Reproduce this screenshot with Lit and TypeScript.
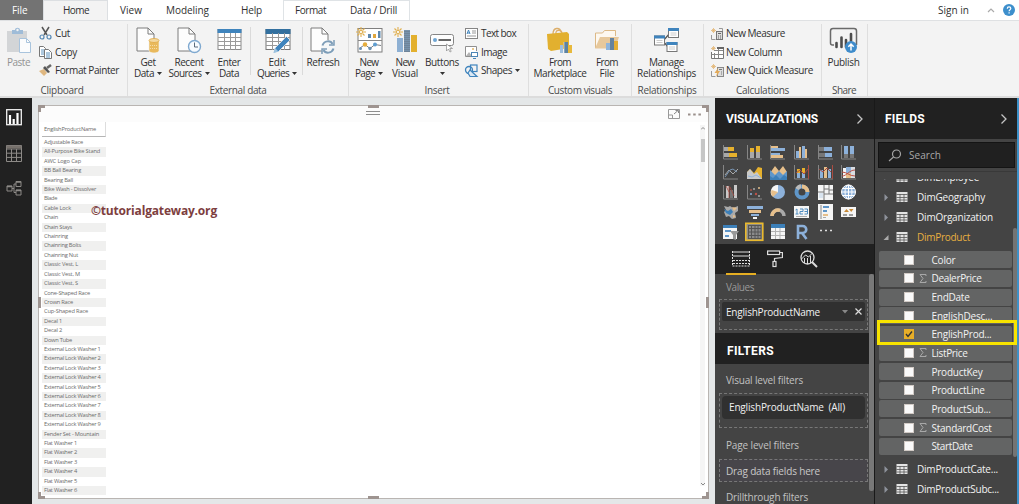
import { LitElement, html, svg, css } from "lit";
import { customElement } from "lit/decorators.js";

const FAMILY = '"Open Sans", "Noto Sans", sans-serif';
const pen = document.createElement("canvas").getContext("2d")!;

/* Text set to a known measure: the tracking is derived from the natural width. */
const label = (text: string, width: number, size = 10, weight = 400, family = FAMILY) => {
  pen.font = `${weight} ${size}px ${family}`;
  const natural = pen.measureText(text).width;
  const tracking = (width - natural) / text.length;
  return html`<span class="label" style="letter-spacing:${tracking.toFixed(3)}px">${text}</span>`;
};

const icon = (w: number, h: number, body: unknown) =>
  html`<svg width=${w} height=${h} viewBox="0 0 ${w} ${h}" fill="none">${body}</svg>`;

const caret = html`<svg class="caret" width="5" height="3" viewBox="0 0 5 3"><path d="M0 0h5L2.500 3z" fill="#333" /></svg>`;

const spark = svg`<path d="M5 0v3M5 7v3M0 5h3M7 5h3M1.500 1.500l2 2M6.500 6.500l2 2M8.500 1.500l-2 2M3.500 6.500l-2 2" stroke="#e0b050" stroke-width="1.100"/><circle cx="5" cy="5" r="1.600" stroke="#e0b050" fill="#fff"/>`;
const page = svg`<path d="M1 1h11l6 6v17H1z" fill="#fdfdfd" stroke="#7c7c7c"/><path d="M12 1v6h6" stroke="#7c7c7c"/>`;

const big = {
  paste: icon(26, 27, svg`<rect x="1" y="4" width="20" height="21" fill="#d3d5d7"/><path d="M6 7V3h3c0-3 5-3 5 0h3v4z" fill="#9fbcd8"/><circle cx="11.500" cy="3" r="1.200" fill="#f3f3f3"/><path d="M13.500 11.500h7l4 4v10h-11z" fill="#fbfcfd" stroke="#a9c4dd"/><path d="M20.500 11.500v4h4" stroke="#a9c4dd"/>`),
  getData: icon(25, 27, svg`${page}<path d="M13 13.500v10c0 3.300 10 3.300 10 0v-10z" fill="#e9b95c" stroke="#f3f3f3" stroke-width=".6"/><ellipse cx="18" cy="13.500" rx="5" ry="2" fill="#f3d9a2" stroke="#e0a844" stroke-width=".8"/><path d="M14 18.500h8M14 21.500h8" stroke="#f5dca8" stroke-dasharray="1 1"/>`),
  recent: icon(25, 27, svg`${page}<circle cx="17.500" cy="19.500" r="6" fill="#f7fbff" stroke="#7fa9d0" stroke-width="1.400"/><path d="M17.500 15.500v4.500h3.500" stroke="#5a6b7c"/>`),
  enter: icon(26, 27, svg`<rect x="2" y="2.500" width="23" height="20" fill="#fff" stroke="#8b8b8b"/><rect x="1.500" y="2" width="24" height="4" fill="#3f84bd"/><path d="M2 10.500h23M2 14.500h23M2 18.500h23M8.500 6v17M14.500 6v17M19.500 6v17" stroke="#9b9b9b"/>`),
  edit: icon(27, 27, svg`<rect x="2" y="2.500" width="24" height="20" fill="#fff" stroke="#777"/><rect x="1.500" y="2" width="25" height="5" fill="#33709f"/><path d="M2 10.500h24M2 14.500h24M2 18.500h24M8.500 6v17M14.500 6v17M20.500 6v17" stroke="#999"/><path d="M9.500 26l1.500-5L22.500 9.500l3.500 3.500L14.500 24.500z" fill="#3f84bd" stroke="#f3f3f3" stroke-width=".7"/><path d="M9.500 26l1.500-5 3.500 3.500z" fill="#9cc2e0"/>`),
  refresh: icon(26, 27, svg`${page}<circle cx="18" cy="20" r="7" fill="#f5f7f8"/><path d="M12.500 18.500c1.500-5 8-5.500 10-1.500M23.500 21.500c-1.500 5-8 5.500-10 1.500" stroke="#7d9db8" stroke-width="2"/><path d="M24 13v5h-5M12 27v-5h5" stroke="#7d9db8" stroke-width="1.500"/>`),
  newPage: icon(27, 27, svg`<rect x="2" y="1.500" width="24" height="23.500" fill="#fff" stroke="#7f7f7f"/><path d="M2 13.500h24" stroke="#888"/><path d="M12 11V7h3v4zM22 11V4h2.500v7z" fill="#5d87ad"/><path d="M17 11V7h3v4z" fill="#e0a63c"/><path d="M4 21l5-3.500 5 4 5-4 6 1" stroke="#7a7f85"/><circle cx="9" cy="17.500" r="2.200" fill="#e6ad3c"/><circle cx="19" cy="17.500" r="2" fill="#5f9ed1"/><circle cx="4.500" cy="21.500" r="1.500" fill="#6c90b0"/><circle cx="14" cy="21.500" r="1.700" fill="#6c90b0"/>${spark}`),
  newVisual: icon(24, 27, svg`${spark}<path d="M4 11h6v14H4z" fill="#8eb0d3"/><path d="M11 3h6v22h-6z" fill="#6f8499"/><path d="M12 3v22M14 3v22M16 3v22" stroke="#86a9c9" stroke-width=".8" stroke-dasharray="1 1"/><path d="M18 8h6v17h-6z" fill="#e3b02e"/>`),
  buttons: icon(26, 27, svg`<rect x="1.500" y="7.500" width="23" height="11" rx="2" fill="#fdfdfd" stroke="#858585"/><circle cx="6" cy="13" r="2" fill="#6ea5d3"/><path d="M9.500 13H22" stroke="#666" stroke-width="2"/><path d="M17.500 17v7l2-2 1.500 3 1.200-.6-1.400-2.900h2.700z" fill="#fff" stroke="#888" stroke-width=".7"/>`),
  market: icon(26, 27, svg`<path d="M6 7c0-7 7-7 8-2M9 7c-1-5 6-5 6 0" stroke="#dcae6a" stroke-width="1.300"/><path d="M0 7l20-2 2 2v14L4 24 1 22z" fill="#e2b02f"/><path d="M13 18h3v8h-3z" fill="#9dbede"/><path d="M17 15h4v11h-4z" fill="#5d83a3"/><path d="M21 18h4v8h-4z" fill="#e8b93c"/><path d="M17 15v11" stroke="#eee" stroke-width=".6"/>`),
  file: icon(26, 27, svg`<path d="M1.500 21V6h7l2-2.500h11V9" fill="#fdf8f0" stroke="#dcb987"/><path d="M1 21.500L6 10h19l-4 11.500z" fill="#e7c89b"/><path d="M12 16h4v7h-4z" fill="#8fb5dc"/><path d="M16 11h4v12h-4z" fill="#65839e"/><path d="M20 14h4v9h-4z" fill="#e3ae35"/>`),
  manage: icon(27, 27, svg`<path d="M10 14l7-8M10 14l5 6" stroke="#555" stroke-width="1.200"/>${[[15.500, 1.500], [1.500, 9], [14, 15.500]].map(([x, y]) => svg`<rect x=${x} y=${y} width="10" height="9" fill="#fff" stroke="#777"/><rect x=${x - 0.5} y=${y - 0.5} width="11" height="3" fill="#3f84bd"/><path d="M${x + 2} ${y + 4.500}h6M${x + 2} ${y + 6.500}h6" stroke="#ccc"/>`)}`),
  publish: icon(29, 27, svg`<path d="M5 18H3.500c-1.500 0-2-1-2-2V4c0-1.500 1-2.500 2.500-2.500h21c1.500 0 2.500 1 2.500 2.500v14" stroke="#6a6a6a" stroke-width="1.500"/><path d="M7.500 16v4M12.500 10.500V20M17 13v7M22 7v7" stroke="#4d4d4d" stroke-width="2.600" stroke-linecap="round"/><circle cx="22" cy="20" r="6" fill="#3f8ccb"/><path d="M22 23.500v-6M19.300 19.800L22 17l2.700 2.800" stroke="#fff" stroke-width="1.500"/>`),
};

const small = {
  cut: icon(13, 13, svg`<path d="M3 0l5 8M10 0L5 8" stroke="#555" stroke-width="1.500"/><circle cx="3" cy="10" r="2" stroke="#5487b3" stroke-width="1.200"/><circle cx="10" cy="10" r="2" stroke="#5487b3" stroke-width="1.200"/>`),
  copy: icon(13, 13, svg`<path d="M.5.500h4l2 2v8h-6z" fill="#fff" stroke="#777"/><path d="M2 4h3M2 6h3M2 8h3" stroke="#5f92bd"/><path d="M5.500 3.500h4l3 3v6h-7z" fill="#fff" stroke="#777"/><path d="M7 7h4M7 9h4M7 11h4" stroke="#5f92bd"/>`),
  painter: icon(13, 13, svg`<path d="M0 7l5-2 3 4-3 3z" fill="#dfb780"/><path d="M4 4l2-2 5 6-2 1z" fill="#555"/><path d="M8 4l4-3" stroke="#666" stroke-width="2.500"/>`),
  text: icon(13, 13, svg`<rect x=".5" y="1.500" width="12" height="10" fill="#fff" stroke="#858585"/><path d="M2 7l1.500-4L5 7M2.500 6h2" stroke="#3f84bd"/><path d="M7 4h4M7 6h4M2 9h9" stroke="#999"/>`),
  image: icon(13, 13, svg`<path d="M6 10.500H.5v-10h11V5" fill="#fff" stroke="#8f8f8f"/><circle cx="8" cy="3" r="1" fill="#e2b565"/><path d="M1 10l3-4 3 4z" fill="#b5b5b5"/><rect x="6.500" y="6.500" width="6" height="4" fill="#fff" stroke="#4c86b6"/><path d="M8 12.500h3" stroke="#4c86b6"/>`),
  shapes: icon(13, 13, svg`<circle cx="4" cy="6" r="3.500" stroke="#3f84bd" stroke-width="1.300"/><rect x="5.500" y="1" width="6.500" height="6.500" stroke="#3f84bd" stroke-width="1.200"/><path d="M3 9l2-3 7 6.500H5z" fill="#dbe9f5" stroke="#3f84bd" stroke-width="1.200"/>`),
  measure: icon(14, 13, svg`<path d="M3.500 1v5M1 3.500h5M2 2l3 3M5 2L2 5" stroke="#e2b573" stroke-width=".8"/><path d="M1.500 8v4.500h4M9 1.500h3.500V4" stroke="#999"/><rect x="6.500" y="4.500" width="6" height="8" fill="#ddd" stroke="#777"/><path d="M8 6.500h3M8 9h1M10 9h1M8 11h1M10 11h1" stroke="#666"/>`),
  column: icon(14, 13, svg`<path d="M3.500 0v5M1 2.500h5M2 1l3 3M5 1L2 4" stroke="#e2b573" stroke-width=".8"/><path d="M1.500 6v6.500h12V1.500H7" fill="#fff" stroke="#777"/><path d="M4.500 7v5M8.500 2v10M4 4.500h9M1.500 8.500h12" stroke="#888"/><rect x="7" y="1" width="7" height="2" fill="#666"/>`),
  quick: icon(14, 13, svg`<path d="M3.500 0v5M1 2.500h5M2 1l3 3M5 1L2 4" stroke="#e2b573" stroke-width=".8"/><path d="M1.500 7v5.500h4" stroke="#999"/><rect x="7.500" y="3.500" width="6" height="9" fill="#ddd" stroke="#888"/><path d="M9 5.500h3M11 8h1M11 10h1" stroke="#777"/><path d="M8 4L4.500 9H7l-1 4 4-6H7.500z" fill="#e3a957"/>`),
};

const G = "#a9a9a9", Y = "#e6b12d", B = "#8db1da", T = "#e6bf8b", D = "#3c7fb8", W = "#f5f5f5";
const axis = svg`<path d="M.5 1v14H15" stroke="#858585"/>`;
const r = (x: number, y: number, w: number, h: number, c: string) => svg`<rect x=${x} y=${y} width=${w} height=${h} fill=${c}/>`;
const visuals: unknown[] = [
  [axis, r(1, 3, 4, 4, G), r(5, 3, 6, 4, Y), r(1, 9, 5, 4, G), r(6, 9, 8, 4, Y)],
  [axis, r(3, 8, 4, 6, G), r(3, 4, 4, 4, Y), r(9, 8, 4, 6, G), r(9, 2, 4, 6, Y)],
  [axis, r(1, 2, 7, 2, T), r(1, 4, 14, 3, B), r(1, 9, 9, 2, B), r(1, 11, 12, 3, T)],
  [axis, r(2, 7, 3, 7, B), r(5, 3, 2, 11, T), r(8, 2, 3, 12, B), r(11, 5, 2, 9, T)],
  [axis, r(1, 3, 5, 4, "#777"), r(6, 3, 8, 4, B), r(1, 9, 6, 4, "#777"), r(7, 9, 7, 4, B)],
  [axis, r(3, 2, 4, 8, B), r(3, 10, 4, 4, "#777"), r(9, 2, 4, 8, B), r(9, 10, 4, 4, "#777")],
  [axis, svg`<path d="M2 11l4-5 4 4 5-5" stroke=${G}/><path d="M2 13l5-7 3-1 4 3" stroke="#7794b3"/>`],
  [svg`<path d="M0 15V8l3-3 4 4 4-6 4 1v11z" fill=${Y}/><path d="M0 15V8l3-3 4 5 3-2 5 7z" fill="#c9c9c9"/><path d="M1 12l4 1 4-2 5 3" stroke=${B}/>`],
  [svg`<path d="M0 9l5-7 4 5 4-5 4 6v8H0z" fill=${T}/><path d="M0 6l5 5 4-4 4 4 4-4v9H0z" fill="#5f96c9"/><path d="M0 12l3 2 3-3 4 4 4-4 3 2v3H0z" fill=${D}/>`],
  [axis, r(3, 9, 3, 5, B), r(3, 5, 3, 4, Y), r(8, 4, 3, 5, Y), r(8, 9, 3, 5, B), svg`<path d="M2 9l4-3 4 4 4-5M14.500 1v14" stroke="#a94c42"/>`],
  [axis, r(2, 6, 3, 8, B), r(6, 3, 3, 11, T), r(10, 5, 3, 9, B), svg`<path d="M1 5l4 3 4-4 4 4M14.500 1v14" stroke="#a94c42"/>`],
  [axis, r(2, 4, 3, 10, W), r(5, 3, 5, 6, B), r(5, 9, 5, 5, T), r(10, 3, 4, 11, "#d8dde2"), svg`<path d="M1 8c5 0 7 4 13 4M1 12c5 0 7-6 13-6" stroke="#bb5147"/>`],
  [axis, r(3, 2, 3, 12, "#c9c9c9"), r(11, 1, 3, 13, "#c9c9c9"), r(7, 6, 3, 8, "#777"), svg`<path d="M3 2l3 6M6 2v12M7 3l4 9" stroke="#a94c42" stroke-width=".8"/>`],
  [axis, svg`<g><circle cx="4" cy="10" r="1" fill=${B}/><circle cx="7" cy="5" r="1" fill=${G}/><circle cx="9" cy="10" r="1.200" fill="#bb5147"/><circle cx="12" cy="4" r="1" fill=${T}/><circle cx="12" cy="12" r="1" fill=${G}/><circle cx="4" cy="6" r="1" fill="#aa5548"/></g>`],
  [svg`<circle cx="8" cy="8" r="7" fill=${B}/><path d="M8 8V1a7 7 0 0 0-6 11z" fill=${W}/><path d="M8 8l-6.500-2A7 7 0 0 0 3 13z" fill=${T}/>`],
  [svg`<circle cx="8" cy="8" r="5.500" stroke="#5f96c9" stroke-width="4"/><path d="M8 2.500A5.500 5.500 0 0 1 13.500 8" stroke=${T} stroke-width="4"/><path d="M3 5A6 6 0 0 1 7 2" stroke="#bbb" stroke-width="4"/>`],
  [r(0, 1, 15, 15, W), svg`<path d="M6 1v15M11 1v9M0 8h6M6 5h5M6 10h9M11 6h4" stroke="#777"/>`, r(1, 9, 4, 5, "#d9e4ef")],
  [svg`<circle cx="7.500" cy="8" r="7" fill="#8db1da" stroke="#fff"/><path d="M.5 8h14M7.500 1v14M2 4.500h11M2 11.500h11" stroke="#fff"/><ellipse cx="7.500" cy="8" rx="3.500" ry="7" stroke="#fff"/>`],
  [svg`<path d="M1 2l4 1 2-1 3 2 5-2v5l-3 2 1 5-4 1-3-3-3 1-2-5 2-2z" fill=${G}/><path d="M1 5l4 2 3-2 2 3-3 3-4-2z" fill=${D}/><path d="M9 3l5 1-3 3zM10 11l3 1-3 2z" fill=${T}/>`],
  [r(0, 2, 16, 3, B), r(2, 6, 12, 3, T), r(4, 10, 8, 2, B), r(6, 13, 4, 2, W)],
  [svg`<path d="M2 12a6 6 0 0 1 12 0" stroke=${G} stroke-width="3.500"/><path d="M2 12a6 6 0 0 1 8-5.600" stroke=${T} stroke-width="3.500"/>`],
  [r(0, 2, 15, 12, W), svg`<path d="M1.500 6L3 5v5M1.500 10h3M6 5h3v2.500H6V10h3M10.500 5h3v5h-3M10.500 7.500h3" stroke="#4f8cc0"/><path d="M2 12.500h11" stroke=${G}/>`],
  [r(0, 0, 15, 16, W), svg`<path d="M3 1v14" stroke="#888"/>`, r(5, 2, 6, 2, "#5f96c9"), r(5, 6, 4, 2, "#5f96c9"), r(5, 10, 5, 2, T), r(5, 13, 3, 1, G)],
  [r(0, 3, 15, 10, W), svg`<path d="M3 8l2.500-3L8 8zM8 5h4.500l-2.300 3z" fill="#c78936"/><path d="M2 11h4M8 11h4" stroke="#444"/>`],
  [r(0, 1, 14, 14, W), r(0, 1, 14, 3, D), svg`<path d="M2 7h6M2 12h4" stroke="#5f96c9" stroke-width="2"/><path d="M7 7h9l-3 4v5l-3-1v-4z" fill="#999"/>`],
  [svg`<rect x="-1.200" y="-.7" width="17" height="17" fill="#8b8b8b" stroke="#e9b92e" stroke-width="1.600"/><path d="M1 1.500h13M1 4.500h13M1 8h13M1 11.500h13M1 14.500h13M1.500 1v14M4.500 1v14M8 1v14M11 1v14M14 1v14" stroke="#555"/>`],
  [r(1, 1, 14, 14, W), r(1, 0, 14, 4, D), svg`<path d="M1 7.500h14M1 11.500h14M5.500 4v11M10 4v11" stroke="#b3b3b3"/>`],
  [svg`<path d="M4 15V2h4.500c5 0 5 7 0 7H4M8 9l4.500 6" stroke=${B} stroke-width="2.600"/>`],
  [svg`<path d="M2 6.500h2M7 6.500h2M12 6.500h2" stroke="#ddd" stroke-width="1.600"/>`],
];

const tableIcon = icon(12, 12, svg`<rect x=".5" y="1" width="11" height="10" fill="#e4e4e4"/><path d="M.5 3.500h11M.5 6.500h11M.5 9h11M4 3v8M8 3v8" stroke="#555" stroke-width=".8"/>`);

const products = [
  ["Adjustable Race", 39], ["All-Purpose Bike Stand", 56], ["AWC Logo Cap", 37], ["BB Ball Bearing", 37],
  ["Bearing Ball", 29], ["Bike Wash - Dissolver", 52], ["Blade", 13], ["Cable Lock", 27], ["Chain", 14],
  ["Chain Stays", 28], ["Chainring", 24], ["Chainring Bolts", 37], ["Chainring Nut", 34], ["Classic Vest, L", 34],
  ["Classic Vest, M", 36], ["Classic Vest, S", 34], ["Cone-Shaped Race", 46], ["Crown Race", 29],
  ["Cup-Shaped Race", 44], ["Decal 1", 18], ["Decal 2", 18], ["Down Tube", 28],
  ...[1, 2, 3, 4, 5, 6, 7, 8, 9].map((n) => [`External Lock Washer ${n}`, 56.500]),
  ["Fender Set - Mountain", 55], ...[1, 2, 3, 4, 5, 6].map((n) => [`Flat Washer ${n}`, 33]),
] as [string, number][];

const fields: [string, number, string][] = [
  ["Color", 24, ""], ["DealerPrice", 50, "sum"], ["EndDate", 38, ""], ["EnglishDesc...", 61, ""],
  ["EnglishProd...", 60, "on"], ["ListPrice", 36, "sum"], ["ProductKey", 51, ""], ["ProductLine", 53, ""],
  ["ProductSub...", 59, ""], ["StandardCost", 60, "sum"], ["StartDate", 41, ""],
];

@customElement("pbi-ribbon")
class PbiRibbon extends LitElement {
  static styles = css`
    :host { display: block; height: 98px; font: 10px/11px "Open Sans", "Noto Sans", sans-serif; color: #303030; }
    svg { display: block; flex: none; overflow: visible; }
    .label { display: inline-block; white-space: pre; }
    .tabs { display: flex; height: 20px; background: #fff; line-height: 20px; }
    .file, .home, .context { box-sizing: border-box; height: 20px; }
    .file { width: 43px; padding-left: 12px; background: #737373; color: #fff; }
    .home { width: 65px; padding-left: 19px; background: #f3f3f3; border: 1px solid #dcdfe2; border-bottom: 0; line-height: 19px; }
    .view { padding-left: 12px; width: 34px; }
    .modeling { padding-left: 12px; width: 63px; }
    .help { padding-left: 12px; width: 30px; }
    .context { display: flex; width: 127px; margin-left: 12px; padding-left: 11px; gap: 24px; border: 1px solid #dfe3e6; border-bottom: 0; line-height: 19px; }
    .account { margin-left: auto; display: flex; align-items: center; padding-right: 4px; gap: 18px; }
    .end { display: flex; align-items: center; gap: 8px; }
    .bar { box-sizing: border-box; display: flex; height: 78px; padding-top: 3px; background: #f3f3f3; border-top: 1px solid #dfe1e3; border-bottom: 2px solid #dcdcdc; }
    .group { box-sizing: border-box; display: flex; flex-direction: column; height: 72px; border-right: 1px solid #dedede; }
    .tools { display: flex; height: 60px; }
    .title { text-align: center; line-height: 12px; color: #4c4c4c; }
    .g1 { width: 128px; } .g2 { width: 221px; } .g3 { width: 180px; } .g4 { width: 103px; } .g5 { width: 72px; } .g6 { width: 118px; } .g7 { width: 46px; }
    .g1 .title, .g3 .title { padding-right: 3px; }
    .g5 .title, .g7 .title { padding-right: 1px; }
    .big { display: flex; flex-direction: column; align-items: center; padding-top: 3px; white-space: nowrap; }
    .big svg:first-child { margin-bottom: 3px; }
    .line { display: flex; align-items: center; gap: 3px; height: 11px; }
    .line svg.caret { margin: 0; }
    .faded { color: #929292; }
    .w32 { width: 32px; } .w37 { width: 37px; } .w38 { width: 38px; } .w40 { width: 40px; } .w42 { width: 42px; } .w45 { width: 43px; } .w48 { width: 48px; } .w62 { width: 62px; } .w71 { width: 69px; }
    .rule { width: 1px; height: 48px; margin: 3px 2px 0; background: #dadada; }
    .rule.second { margin: 3px 0 0 1px; }
    .stack { display: flex; flex-direction: column; padding-top: 0.5px; }
    .row { display: flex; align-items: center; height: 18.5px; gap: 3px; }
    .calc { padding-left: 6px; } .calc .row { gap: 2px; }
    .clip { padding-left: 2px; } .insert { padding-left: 2px; }
  `;
  big(w: string, glyph: unknown, lines: unknown[]) {
    return html`<div class="big ${w}">${glyph}${lines.map((l) => html`<div class="line">${l}</div>`)}</div>`;
  }
  row(glyph: unknown, text: string, w: number, more: unknown = "") {
    return html`<div class="row">${glyph}${label(text, w)}${more}</div>`;
  }
  group(cls: string, title: string, w: number, tools: unknown) {
    return html`<section class="group ${cls}"><div class="tools">${tools}</div><div class="title">${label(title, w)}</div></section>`;
  }
  render() {
    return html`
      <nav class="tabs">
        <div class="file">${label("File", 15.500)}</div>
        <div class="home">${label("Home", 26)}</div>
        <div class="view">${label("View", 22)}</div>
        <div class="modeling">${label("Modeling", 43)}</div>
        <div class="help">${label("Help", 21)}</div>
        <div class="context">${label("Format", 31)}${label("Data / Drill", 47)}</div>
        <div class="account">${label("Sign in", 31)}
          <div class="end">
            ${icon(8, 5, svg`<path d="M1 4l3-3 3 3" stroke="#aaa" stroke-width="1.200"/>`)}
            ${icon(12, 12, svg`<circle cx="6" cy="6" r="6" fill="#3d8fcc"/><path d="M4.300 4.700c0-2.400 3.500-2.200 3.500-.2 0 1.300-1.700 1.100-1.700 2.800M6.100 8.300v1.200" stroke="#fff" stroke-width="1.200"/>`)}
          </div>
        </div>
      </nav>
      <div class="bar">
        ${this.group("g1", "Clipboard", 43, html`
          ${this.big("w37 faded", big.paste, [label("Paste", 23)])}
          <div class="stack clip">${this.row(small.cut, "Cut", 15)}${this.row(small.copy, "Copy", 22)}${this.row(small.painter, "Format Painter", 64)}</div>`)}
        ${this.group("g2", "External data", 57, html`
          ${this.big("w40", big.getData, [label("Get", 15), html`${label("Data", 20)}${caret}`])}
          ${this.big("w42", big.recent, [label("Recent", 29), html`${label("Sources", 33)}${caret}`])}
          ${this.big("w38", big.enter, [label("Enter", 23), label("Data", 20)])}
          <i class="rule"></i>
          ${this.big("w48", big.edit, [label("Edit", 17), html`${label("Queries", 32)}${caret}`])}
          <i class="rule second"></i>
          ${this.big("w40", big.refresh, [label("Refresh", 33)])}`)}
        ${this.group("g3", "Insert", 25, html`
          ${this.big("w40", big.newPage, [label("New", 19), html`${label("Page", 20)}${caret}`])}
          ${this.big("w32", big.newVisual, [label("New", 19), label("Visual", 26)])}
          ${this.big("w42", big.buttons, [label("Buttons", 34), caret])}
          <div class="stack insert">${this.row(small.text, "Text box", 35)}${this.row(small.image, "Image", 26)}${this.row(small.shapes, "Shapes", 31, caret)}</div>`)}
        ${this.group("g4", "Custom visuals", 64, html`
          ${this.big("w62", big.market, [label("From", 22), label("Marketplace", 53)])}
          ${this.big("w32", big.file, [label("From", 22), label("File", 15)])}`)}
        ${this.group("g5", "Relationships", 59, this.big("w71", big.manage, [label("Manage", 35), label("Relationships", 59)]))}
        ${this.group("g6", "Calculations", 53, html`
          <div class="stack calc">${this.row(small.measure, "New Measure", 59)}${this.row(small.column, "New Column", 56)}${this.row(small.quick, "New Quick Measure", 87)}</div>`)}
        ${this.group("g7", "Share", 24, this.big("w45", big.publish, [label("Publish", 32)]))}
      </div>`;
  }
}

@customElement("pbi-canvas")
class PbiCanvas extends LitElement {
  static styles = css`
    :host { box-sizing: border-box; display: block; width: 683px; height: 406px; padding: 7px 6px 5px; background: #e4e7e8; font: 5.7px/9.42px "Open Sans", "Noto Sans", sans-serif; color: #6b6b6b; }
    svg { display: block; }
    .label { white-space: pre; }
    .visual { position: relative; box-sizing: border-box; height: 394px; padding: 0 3px 0 2.500px; background: #fff; border: 1px solid #b9b5b2; display: flex; flex-direction: column; }
    .head { display: flex; justify-content: flex-end; align-items: center; gap: 8px; height: 16px; margin: 0 -3px; padding-right: 7px; background: #fcfcfc; }
    .content { display: flex; justify-content: space-between; height: 376px; }
    .grid { width: 64px; }
    .caption { box-sizing: border-box; height: 15px; padding-left: 2.500px; margin-bottom: 1px; line-height: 15px; border-bottom: 1px solid #b5b5b5; border-right: 1px solid #ddd; }
    .item { height: 9.42px; padding-left: 2.500px; }
    .item:nth-child(odd) { background: #f0f0ef; }
    .scroll { width: 5px; margin-top: 3px; margin-bottom: 12px; display: flex; flex-direction: column; align-items: center; background: #f5f5f5; }
    .thumb { width: 4px; height: 23px; margin: 8px 0 auto; background: #c6c6c6; }
    .handle { position: absolute; box-sizing: border-box; border: 0 solid #9e9490; }
    .nw { left: -1px; top: -1px; width: 7px; height: 7px; border-width: 3px 0 0 3px; }
    .ne { right: -1px; top: -1px; width: 7px; height: 7px; border-width: 3px 3px 0 0; }
    .sw { left: -1px; bottom: -1px; width: 7px; height: 7px; border-width: 0 0 3px 3px; }
    .se { right: -1px; bottom: -1px; width: 7px; height: 7px; border-width: 0 3px 3px 0; }
    .n { left: 329px; top: -1px; width: 11px; height: 3px; border-top-width: 3px; }
    .s { left: 329px; bottom: -1px; width: 11px; height: 3px; border-top-width: 3px; }
    .w { left: -1px; top: 191px; width: 3px; height: 11px; border-left-width: 3px; }
    .e { right: -1px; top: 191px; width: 3px; height: 11px; border-left-width: 3px; }
    .grip { position: absolute; left: 327px; top: 5px; width: 14px; height: 2px; border: solid #8e8e8e; border-width: 1px 0; }
    .mark { position: absolute; left: 52px; top: 97px; font-size: 12px; font-weight: 700; line-height: 16px; color: #7d3e3e; }
  `;
  render() {
    return html`<div class="visual">
      <div class="head">
        ${icon(12, 10, svg`<path d="M.5.500h11v9H.5zM.5 6h4v3.500" stroke="#999"/><path d="M6 5l4-3.500M7.500 1.500H10.500V4" stroke="#888"/>`)}
        ${icon(13, 3, svg`<path d="M0 1.500h2.500M5.200 1.500h2.500M10.400 1.500h2.500" stroke="#9a8f8b" stroke-width="2"/>`)}
      </div>
      <div class="content">
        <div class="grid">
          <div class="caption">${label("EnglishProductName", 52, 5.700)}</div>
          ${products.map(([name, w]) => html`<div class="item">${label(name, w, 5.700)}</div>`)}
        </div>
        <div class="scroll">
          ${icon(4, 6, svg`<path d="M0 4.500l2-2 2 2" stroke="#888"/>`)}
          <div class="thumb"></div>
          ${icon(4, 4, svg`<path d="M0 1l2 2 2-2" stroke="#888"/>`)}
        </div>
      </div>
      <i class="grip"></i>
      ${["nw", "ne", "sw", "se", "n", "s", "w", "e"].map((c) => html`<i class="handle ${c}"></i>`)}
      <div class="mark">${label("©tutorialgateway.org", 126, 12, 700)}</div>
    </div>`;
  }
}

@customElement("pbi-visuals")
class PbiVisuals extends LitElement {
  static styles = css`
    :host { display: block; width: 159px; height: 406px; overflow: hidden; background: #444; font: 10px/14px "Open Sans", "Noto Sans", sans-serif; color: #c9c9c9; }
    svg { display: block; overflow: visible; }
    .label { white-space: pre; }
    .title { box-sizing: border-box; display: flex; align-items: center; justify-content: space-between; height: 41px; padding: 0 11px; background: #212121; color: #fff; font: 700 12px "Roboto", sans-serif; }
    .gallery { box-sizing: border-box; display: grid; grid-template-columns: repeat(6, 16px); grid-auto-rows: 16px; column-gap: 7.7px; row-gap: 4.2px; height: 105px; padding: 4.500px 0 0 8px; }
    .modes { display: flex; height: 30px; padding-left: 11px; background: #212121; }
    .mode { box-sizing: border-box; width: 30px; height: 31px; padding: 6px 0 0 6px; border-bottom: 2px solid transparent; margin-right: 4px; }
    .mode.on { border-color: #e6ae22; }
    .scroller { display: flex; height: 230px; }
    .form { width: 154px; }
    .track { width: 5px; }
    .thumb { height: 217px; background: #787878; border-radius: 2px; }
    .cap { padding-left: 11px; height: 14px; color: #c2c2c2; }
    .dim { color: #999; padding-top: 6px; }
    .well { box-sizing: border-box; margin: 5px 1px 0 4px; padding: 2px; border: 1px dashed #777; }
    .values { height: 31px; }
    .chip { display: flex; align-items: center; height: 19px; background: #303030; border-radius: 2px; color: #f0f0f0; padding-left: 4px; }
    .chip svg:nth-of-type(1) { margin: 0 7px 0 auto; }
    .chip svg:nth-of-type(2) { margin-right: 3px; }
    .filters { box-sizing: border-box; display: flex; align-items: center; height: 31px; margin-top: 3px; padding: 4px 0 0 12px; background: #212121; color: #fff; font: 700 12px "Roboto", sans-serif; }
    .cap.visual { padding-top: 9px; }
    .well.visual { height: 35px; margin-top: 6px; }
    .chip.tall { height: 23px; border-radius: 4px; padding-left: 7px; }
    .chip.tall .label { padding-bottom: 1px; }
    .cap.page { padding-top: 10px; }
    .well.drag { height: 23px; margin-top: 7px; padding: 4px 6px; background: #47454a; }
    .cap.drill { padding-top: 8px; }
  `;
  render() {
    const rf = '"Roboto", sans-serif';
    return html`
      <header class="title">${label("VISUALIZATIONS", 92, 12, 700, rf)}${icon(6, 10, svg`<path d="M.5.500L5 5 .5 9.500" stroke="#c5c5c5" stroke-width="1.300"/>`)}</header>
      <div class="gallery">${visuals.map((v) => icon(16, 16, v))}</div>
      <div class="modes">
        <div class="mode on">${icon(18, 17, svg`<path d="M1 2h17M1 6h17" stroke="#ddd" stroke-width="1.200"/><path d="M.5 1v15h17V1M1 10.500h17M1 13.500h17" stroke="#ddd" stroke-dasharray="2 1"/>`)}</div>
        <div class="mode">${icon(16, 17, svg`<rect x="1.600" y="1" width="12" height="3.500" stroke="#ddd" stroke-width="1.200"/><path d="M14 2.500h2.400v5L8.500 8.500v3" stroke="#ddd" stroke-width="1.200"/><rect x="7" y="11.500" width="3" height="5" stroke="#ddd" stroke-width="1.200"/>`)}</div>
        <div class="mode">${icon(18, 18, svg`<circle cx="7.500" cy="7.500" r="6.500" stroke="#ddd" stroke-width="1.300"/><path d="M12 12l5 5" stroke="#ddd" stroke-width="2"/><path d="M1.500 9l4-4 3 2 4-4M4.500 8v5M7.500 8v6M10.500 6v7" stroke="#ddd"/>`)}</div>
      </div>
      <div class="scroller">
        <div class="form">
          <div class="cap dim">${label("Values", 28)}</div>
          <div class="well values"><div class="chip">${label("EnglishProductName", 94)}${icon(6, 4, svg`<path d="M0 0h6L3 3.500z" fill="#888"/>`)}${icon(7, 7, svg`<path d="M.5.500l6 6M6.500.500l-6 6" stroke="#ddd" stroke-width="1.200"/>`)}</div></div>
          <div class="filters">${label("FILTERS", 47, 12, 700, rf)}</div>
          <div class="cap visual">${label("Visual level filters", 77)}</div>
          <div class="well visual"><div class="chip tall">${label("EnglishProductName  (All)", 116)}</div></div>
          <div class="cap page">${label("Page level filters", 73)}</div>
          <div class="well drag">${label("Drag data fields here", 94)}</div>
          <div class="cap drill">${label("Drillthrough filters", 82)}</div>
        </div>
        <div class="track"><div class="thumb"></div></div>
      </div>`;
  }
}

@customElement("pbi-fields")
class PbiFields extends LitElement {
  static styles = css`
    :host { position: relative; display: block; width: 142px; height: 406px; overflow: hidden; background: #444; font: 10px/14px "Open Sans", "Noto Sans", sans-serif; color: #f2f2f2; }
    svg { display: block; flex: none; }
    .label { white-space: pre; }
    .title { box-sizing: border-box; display: flex; align-items: center; justify-content: space-between; height: 41px; padding: 0 10px; background: #212121; color: #fff; font: 700 12px "Roboto", sans-serif; }
    .search { box-sizing: border-box; display: flex; align-items: center; gap: 7px; width: 137px; height: 26px; margin: 3px 0 3px 3px; padding-left: 9px; background: #202020; border: 1px solid #141414; color: #a9a9a9; }
    .list { display: flex; flex-direction: column; height: 325px; padding-top: 7px; border-top: 1px solid #393939; overflow: hidden; }
    .clip { display: flex; flex-direction: column; justify-content: flex-end; height: 8px; flex: none; overflow: hidden; }
    .table { display: flex; align-items: center; height: 20.2px; flex: none; padding-left: 8px; }
    .table svg:nth-of-type(1) { margin-right: 7px; }
    .table svg:nth-of-type(2) { margin-right: 9px; }
    .open { color: #e8b040; }
    .columns { display: flex; flex-direction: column; flex: none; gap: 1.65px; margin: 3.7px 0 4.500px 4px; width: 133px; }
    .field { box-sizing: border-box; display: flex; align-items: center; height: 17px; padding-left: 25px; background: #636464; border-radius: 2px; }
    .box { box-sizing: border-box; width: 10px; height: 10px; margin-right: 5px; background: #fafafa; border: 1px solid #d2cbc6; }
    .box.on { background: #e8ae28; border-color: #e8ae28; }
    .sigma { width: 9px; margin-right: 3.5px; }
    .thumb { position: absolute; right: 0; top: 130px; width: 4px; height: 229px; background: #747474; border-radius: 2px; }
    .ring { position: absolute; left: 2px; top: 222px; box-sizing: border-box; width: 140px; height: 25px; border: 3px solid #f8e400; }
  `;
  table(name: string, w: number, open = false) {
    return html`<div class="table ${open ? "open" : ""}">
      ${icon(6, 7, open ? svg`<path d="M5.500 1v5h-5z" fill="#aaa"/>` : svg`<path d="M1.500 0v7L5 3.500z" fill="#8e929b"/>`)}${tableIcon}${label(name, w)}</div>`;
  }
  render() {
    return html`
      <header class="title">${label("FIELDS", 40, 12, 700, '"Roboto", sans-serif')}${icon(6, 10, svg`<path d="M.5.500L5 5 .5 9.500" stroke="#c5c5c5" stroke-width="1.300"/>`)}</header>
      <div class="search">${icon(14, 13, svg`<circle cx="8.500" cy="5" r="4" stroke="#a5a5a5" stroke-width="1.200"/><path d="M5.500 8L1 12" stroke="#a5a5a5" stroke-width="1.200"/>`)}${label("Search", 32)}</div>
      <div class="list">
        <div class="clip">${this.table("DimEmployee", 62)}</div>
        ${this.table("DimGeography", 68)}${this.table("DimOrganization", 76)}${this.table("DimProduct", 53, true)}
        <div class="columns">${fields.map(([name, w, kind]) => html`<div class="field">
          <span class="box ${kind}">${kind === "on" ? icon(8, 8, svg`<path d="M1 4l2 2.500L7 1.500" stroke="#333" stroke-width="1.400"/>`) : ""}</span>
          <span class="sigma">${kind === "sum" ? icon(8, 9, svg`<path d="M7 2V.500H1L4 4.500 1 8.500H7V7" stroke="#a8a8a8"/>`) : ""}</span>
          ${label(name, w)}</div>`)}</div>
        ${this.table("DimProductCate...", 81)}${this.table("DimProductSubc...", 82)}
      </div>
      <i class="thumb"></i><i class="ring"></i>`;
  }
}

@customElement("app-root")
class AppRoot extends LitElement {
  static styles = css`
    :host { display: block; width: 1019px; height: 504px; overflow: hidden; background: #212121; }
    .body { display: flex; height: 406px; }
    .rail { display: flex; flex-direction: column; align-items: center; gap: 19px; box-sizing: border-box; width: 32px; padding: 11px 4px 0 0; background: #212121; }
    .rail svg { display: block; }
    .gap { width: 1px; background: #191919; }
    .edge { flex: 1; background: #3e91c8; }
  `;
  render() {
    return html`<pbi-ribbon></pbi-ribbon>
      <main class="body">
        <nav class="rail">
          ${icon(16, 17, svg`<rect x=".7" y=".7" width="14.600" height="15" stroke="#f2f2f2" stroke-width="1.300"/><path d="M4 15V6M7.700 15v-5M11.500 15V4" stroke="#fff" stroke-width="2.200"/>`)}
          ${icon(16, 17, svg`<path d="M.5.500h15v16H.5zM.5 4h15M.5 8.200h15M.5 12.400h15M5.500 4v12M10.500 4v12" stroke="#8d8a87"/><path d="M.5 2h15" stroke="#77716c" stroke-width="3"/>`)}
          ${icon(16, 16, svg`<path d="M1 5h5v5H1zM10 .500h5v5h-5zM10 9h5v5h-5zM6 7.500h2M10 3H8v8.500h2" stroke="#8d8a87"/><path d="M1 5.500h5M10 1h5M10 9.500h5" stroke="#8d8a87" stroke-width="1.600"/>`)}
        </nav>
        <pbi-canvas></pbi-canvas>
        <pbi-visuals></pbi-visuals>
        <i class="gap"></i>
        <pbi-fields></pbi-fields>
        <i class="edge"></i>
      </main>`;
  }
}
